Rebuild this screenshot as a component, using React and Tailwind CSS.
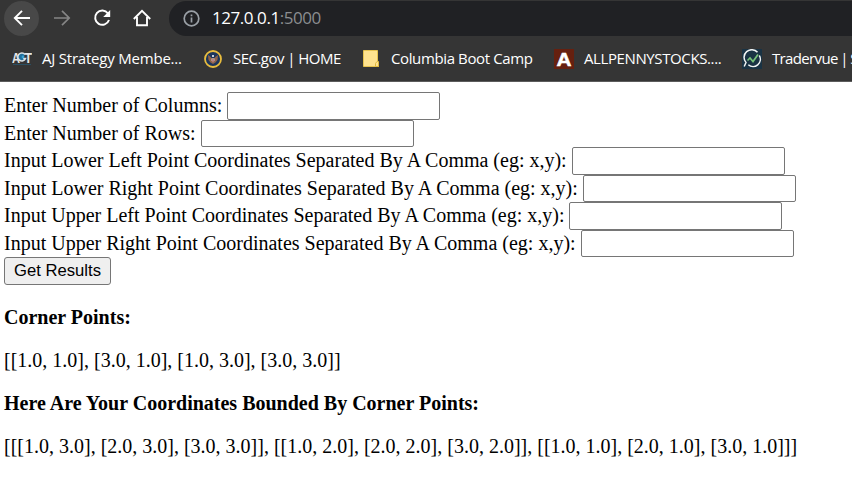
import React from "react";

const SERIF = "font-['Liberation_Serif','Times_New_Roman',serif]";
const UI = "font-['Open_Sans','Noto_Sans',sans-serif]";

function AgtLogo() {
  return (
    <svg width="20" height="20" viewBox="0 0 20 20">
      <g fontFamily="Liberation Sans, sans-serif" fontWeight="bold" fontSize="15" fill="#e4e6e8">
        <text x="0" y="13.500" textLength="8" lengthAdjust="spacingAndGlyphs">A</text>
        <text x="12.500" y="13.500" textLength="7.500" lengthAdjust="spacingAndGlyphs">T</text>
      </g>
      <path d="M13 5.500A4 4 0 1 0 13.500 9.500H11" fill="#1f6f9d" stroke="#d9e0e4" strokeWidth="1.600" />
      <circle cx="11" cy="8" r="1.400" fill="#38a3d6" />
      <path d="M1 15.500h18" stroke="#2b4f62" />
    </svg>
  );
}

function SecSeal() {
  return (
    <svg width="20" height="20" viewBox="0 0 20 20">
      <circle cx="10" cy="10" r="8" fill="#1c355c" stroke="#e9bd3e" strokeWidth="1.8" />
      <path d="M5 6l2.200 1.500 1.300 1.500h3l1.300-1.500L15 6l-.5 5-2 2.500-2.500 1.500-2.500-1.500L5.500 11z" fill="#8f6248" />
      <path d="M9 6h2v2H9z" fill="#c9ced6" />
      <path d="M8.500 9.500h3v2l-1.500 2-1.500-2z" fill="#b9c0cc" />
      <path d="M10 10v3" stroke="#b5403a" />
    </svg>
  );
}

function Folder() {
  return (
    <svg width="20" height="20" viewBox="0 0 20 20">
      <path d="M2.500 1.500h14v11l1 1v4h-15z" fill="#ffe38f" stroke="#e6c34f" />
      <path d="M14.500 17.500v-3l1.500-2h1.500v5z" fill="#ffe38f" stroke="#e0b93e" />
    </svg>
  );
}

function RedA() {
  return (
    <svg width="20" height="20" viewBox="0 0 20 20">
      <rect width="20" height="20" fill="#66200f" />
      <text x="2.500" y="16.500" fontFamily="Liberation Sans, sans-serif" fontWeight="bold" fontSize="19" textLength="15" lengthAdjust="spacingAndGlyphs" fill="#fff" stroke="#fff" strokeWidth=".5">A</text>
    </svg>
  );
}

function Tradervue() {
  return (
    <svg width="20" height="20" viewBox="0 0 20 20" fill="none">
      <rect width="20" height="20" fill="#1a3344" />
      <path d="M15.500 3.300A7.300 7.300 0 0 0 4 13.500L2.200 17.500M6.300 15.800A7.300 7.300 0 0 0 17.300 6.500" stroke="#f2f5f5" strokeWidth="1.500" />
      <path d="M5.500 11.500l2.500-2.500 3 3.500 5-7" stroke="#79c27a" strokeWidth="1.700" />
    </svg>
  );
}

function Toolbar() {
  return (
    <div className="flex h-9 items-center">
      <div className="ml-1 flex size-[35px] items-center justify-center rounded-full bg-[#484848]">
        <svg width="18" height="18" viewBox="0 0 18 18" fill="none" stroke="#fff" strokeWidth="1.900">
          <path d="M17 9H2M9 1.800L1.800 9L9 16.200" />
        </svg>
      </div>
      <svg className="ml-[14px]" width="18" height="18" viewBox="0 0 18 18" fill="none" stroke="#858585" strokeWidth="1.700">
        <path d="M1 9h15M9 1.800L16.200 9L9 16.200" />
      </svg>
      <svg className="ml-[22px]" width="18" height="18" viewBox="0 0 18 18" fill="none">
        <path d="M15 4.500A7.100 7.100 0 1 0 16 11" stroke="#fff" strokeWidth="2" />
        <path d="M17.200 1v7h-7z" fill="#fff" />
      </svg>
      <svg className="ml-[22px]" width="18" height="18" viewBox="0 0 18 18" fill="none" stroke="#fff" strokeWidth="1.900">
        <path d="M.8 10L9 1.800L17.200 10M4 8v8.200h10V8" />
      </svg>
      <div className="ml-[18px] flex h-[35px] flex-1 items-center rounded-l-full bg-[#202124] pl-[14px]">
        <svg width="17" height="17" viewBox="0 0 17 17" fill="none" stroke="#9aa0a6" strokeWidth="1.700">
          <circle cx="8.500" cy="8.500" r="7.300" />
          <path d="M8.500 7.500v5M8.500 4.500v1.700" />
        </svg>
        <div className={`${UI} ml-3 whitespace-nowrap text-[17px] leading-5 tracking-[-0.45px] text-white`}>
          127.0.0.1<span className="text-[#8b8d90]">:5000</span>
        </div>
      </div>
    </div>
  );
}

function Bookmark({ icon, text, width, track }) {
  return (
    <div className={`flex shrink-0 items-center ${width}`}>
      {icon}
      <span className={`ml-[10px] whitespace-nowrap pb-px text-[15px] leading-5 text-white ${track}`}>{text}</span>
    </div>
  );
}

function Bookmarks() {
  return (
    <div className={`${UI} flex h-[45px] items-center overflow-hidden pl-3`}>
      <Bookmark icon={<AgtLogo />} text="AJ Strategy Membe..." width="w-[191px]" track="tracking-[-0.21px]" />
      <Bookmark icon={<SecSeal />} text="SEC.gov | HOME" width="w-[158px]" track="tracking-[-0.53px]" />
      <Bookmark icon={<Folder />} text="Columbia Boot Camp" width="w-[193px]" track="tracking-[-0.38px]" />
      <Bookmark icon={<RedA />} text="ALLPENNYSTOCKS...." width="w-[188px]" track="tracking-[-0.39px]" />
      <Bookmark icon={<Tradervue />} text="Tradervue | S" width="w-[160px]" track="tracking-[-0.65px] [word-spacing:-0.8px]" />
    </div>
  );
}

const FIELDS = [
  ["Enter Number of Columns:", "w-[223px]", "h-7"],
  ["Enter Number of Rows:", "w-[197px]", "h-[27px]"],
  ["Input Lower Left Point Coordinates Separated By A Comma (eg: x,y):", "w-[568px]", "h-7"],
  ["Input Lower Right Point Coordinates Separated By A Comma (eg: x,y):", "w-[579px]", "h-[27px]"],
  ["Input Upper Left Point Coordinates Separated By A Comma (eg: x,y):", "w-[565px]", "h-7"],
  ["Input Upper Right Point Coordinates Separated By A Comma (eg: x,y):", "w-[577px]", "h-[27px]"],
];

export default function App() {
  return (
    <div className="flex h-[481px] w-[852px] flex-col overflow-hidden bg-white">
      <header className="h-[82px] shrink-0 border-b border-[#5c5c5c] bg-[#353535]">
        <Toolbar />
        <Bookmarks />
      </header>
      <main className={`${SERIF} pl-1 pt-[10px] text-[20px] leading-[23px] text-black`}>
        {FIELDS.map(([label, width, height]) => (
          <label key={label} className={`flex ${height}`}>
            <span className={`shrink-0 whitespace-nowrap pt-0.5 ${width}`}>{label}</span>
            <input className="h-full w-[213px] rounded-[2px] border border-[#767676] bg-white" />
          </label>
        ))}
        <button className="block h-7 w-[107px] rounded-[3px] border border-[#767676] bg-[#efefef] pb-px font-['Liberation_Sans',Arial,sans-serif] text-[16.67px] leading-[25px]">
          Get Results
        </button>
        <p className="mt-[21px] whitespace-nowrap font-bold">Corner Points:</p>
        <p className="mt-5 whitespace-nowrap">[[1.0, 1.0], [3.0, 1.0], [1.0, 3.0], [3.0, 3.0]]</p>
        <p className="mt-5 whitespace-nowrap font-bold">Here Are Your Coordinates Bounded By Corner Points:</p>
        <p className="mt-5 whitespace-nowrap">
          [[[1.0, 3.0], [2.0, 3.0], [3.0, 3.0]], [[1.0, 2.0], [2.0, 2.0], [3.0, 2.0]], [[1.0, 1.0], [2.0, 1.0], [3.0, 1.0]]]
        </p>
      </main>
    </div>
  );
}
